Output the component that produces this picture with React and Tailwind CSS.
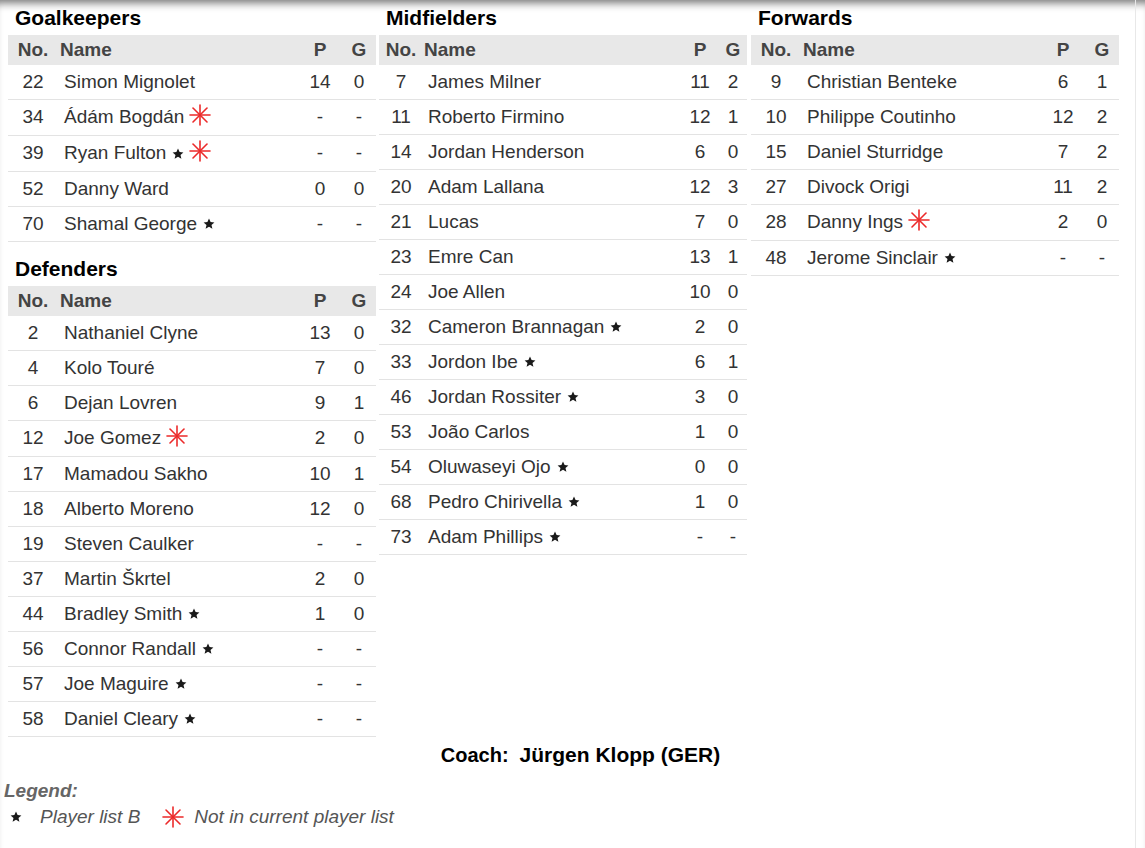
import React from 'react';

// squad data: [no, name, flags, P, G]  flags: b = player list B, x = not in current list
const squad = {
  Goalkeepers: [
    [22, 'Simon Mignolet', '', '14', '0'],
    [34, 'Ádám Bogdán', 'x', '-', '-'],
    [39, 'Ryan Fulton', 'bx', '-', '-'],
    [52, 'Danny Ward', '', '0', '0'],
    [70, 'Shamal George', 'b', '-', '-'],
  ],
  Defenders: [
    [2, 'Nathaniel Clyne', '', '13', '0'],
    [4, 'Kolo Touré', '', '7', '0'],
    [6, 'Dejan Lovren', '', '9', '1'],
    [12, 'Joe Gomez', 'x', '2', '0'],
    [17, 'Mamadou Sakho', '', '10', '1'],
    [18, 'Alberto Moreno', '', '12', '0'],
    [19, 'Steven Caulker', '', '-', '-'],
    [37, 'Martin Škrtel', '', '2', '0'],
    [44, 'Bradley Smith', 'b', '1', '0'],
    [56, 'Connor Randall', 'b', '-', '-'],
    [57, 'Joe Maguire', 'b', '-', '-'],
    [58, 'Daniel Cleary', 'b', '-', '-'],
  ],
  Midfielders: [
    [7, 'James Milner', '', '11', '2'],
    [11, 'Roberto Firmino', '', '12', '1'],
    [14, 'Jordan Henderson', '', '6', '0'],
    [20, 'Adam Lallana', '', '12', '3'],
    [21, 'Lucas', '', '7', '0'],
    [23, 'Emre Can', '', '13', '1'],
    [24, 'Joe Allen', '', '10', '0'],
    [32, 'Cameron Brannagan', 'b', '2', '0'],
    [33, 'Jordon Ibe', 'b', '6', '1'],
    [46, 'Jordan Rossiter', 'b', '3', '0'],
    [53, 'João Carlos', '', '1', '0'],
    [54, 'Oluwaseyi Ojo', 'b', '0', '0'],
    [68, 'Pedro Chirivella', 'b', '1', '0'],
    [73, 'Adam Phillips', 'b', '-', '-'],
  ],
  Forwards: [
    [9, 'Christian Benteke', '', '6', '1'],
    [10, 'Philippe Coutinho', '', '12', '2'],
    [15, 'Daniel Sturridge', '', '7', '2'],
    [27, 'Divock Origi', '', '11', '2'],
    [28, 'Danny Ings', 'x', '2', '0'],
    [48, 'Jerome Sinclair', 'b', '-', '-'],
  ],
};

const SmallStar = () => (
  <svg width="12" height="12" viewBox="0 0 24 24" className="shrink-0">
    <path
      d="M12 1l3.2 7.2 7.6.7-5.8 5.1 1.8 7.6L12 17.6l-6.8 4 1.8-7.6-5.8-5.1 7.6-.7z"
      fill="#1a1a1a"
    />
  </svg>
);

const RedAsterisk = ({ className = '' }) => (
  <svg width="22" height="22" viewBox="0 0 22 22" className={`shrink-0 ${className}`}>
    <g stroke="#ec2a2a" strokeWidth="1.6" strokeLinecap="round">
      <line x1="11" y1="1" x2="11" y2="21" />
      <line x1="1" y1="11" x2="21" y2="11" />
      <line x1="4" y1="4" x2="18" y2="18" />
      <line x1="18" y1="4" x2="4" y2="18" />
    </g>
  </svg>
);

// wide = layout of goalkeepers/defenders/forwards tables, narrow = midfielders
const PlayerTable = ({ title, rows, narrow = false, className = '' }) => {
  const noCol = narrow ? 'w-[44px]' : 'w-[50px]';
  const pCol = narrow ? 'w-[38px]' : 'w-[44px]';
  const gCol = narrow ? 'w-[28px]' : 'w-[34px]';
  const headPad = narrow ? 'pl-px' : 'pl-[2px]';
  const bodyPad = narrow ? 'pl-[5px]' : 'pl-[6px]';

  return (
    <div className={className}>
      <div className="h-[35px] flex items-center pl-[7px] text-[21px] font-bold text-black">{title}</div>
      <div className="w-[368px]">
        <div className="h-[30px] flex items-center bg-[#e8e8e8] text-[19px] font-bold text-[#444]">
          <div className={`${noCol} text-center`}>No.</div>
          <div className={`flex-1 ${headPad}`}>Name</div>
          <div className={`${pCol} text-center`}>P</div>
          <div className={`${gCol} text-center`}>G</div>
        </div>
        {rows.map(([no, name, flags, p, g]) => (
          <div
            key={no}
            className={`${flags.includes('x') ? 'h-[36px]' : 'h-[35px]'} flex items-center border-b border-[#e3e3e3] text-[19px] text-[#333]`}
          >
            <div className={`${noCol} text-center`}>{no}</div>
            <div className={`flex-1 ${bodyPad} flex items-center gap-[6px] whitespace-nowrap`}>
              <span>{name}</span>
              {flags.includes('b') && <SmallStar />}
              {flags.includes('x') && <RedAsterisk className="mb-[6px] -ml-[1px]" />}
            </div>
            <div className={`${pCol} text-center`}>{p}</div>
            <div className={`${gCol} text-center`}>{g}</div>
          </div>
        ))}
      </div>
    </div>
  );
};

export default function App() {
  return (
    <div className="min-h-[848px] bg-white font-['Liberation_Sans',Arial,sans-serif] shadow-[inset_0_9px_8px_-6px_rgba(0,0,0,0.55)]">
      <div className="w-[1136px] min-h-[848px] border-r border-[#e8e8e8]">
        <div className="flex pl-2 gap-[3px]">
          <div>
            <PlayerTable title="Goalkeepers" rows={squad.Goalkeepers} />
            <PlayerTable title="Defenders" rows={squad.Defenders} className="mt-[9px]" />
          </div>
          <PlayerTable title="Midfielders" rows={squad.Midfielders} narrow />
          <PlayerTable title="Forwards" rows={squad.Forwards} className="ml-px" />
        </div>

        <div className="h-[36px] flex items-center justify-center pl-[26px] text-[20px] font-bold text-black">
          <span>Coach:</span>
          <span className="ml-[11px] text-[21px]">Jürgen Klopp (GER)</span>
        </div>

        <div className="mt-[5px] h-[26px] flex items-center pl-1 text-[19px] font-bold italic text-[#666]">
          Legend:
        </div>
        <div className="h-[26px] flex items-center text-[19px] italic text-[#555]">
          <div className="ml-[10px]">
            <SmallStar />
          </div>
          <span className="ml-[18px]">Player list B</span>
          <RedAsterisk className="ml-[22px]" />
          <span className="ml-[10px]">Not in current player list</span>
        </div>
      </div>
    </div>
  );
}
